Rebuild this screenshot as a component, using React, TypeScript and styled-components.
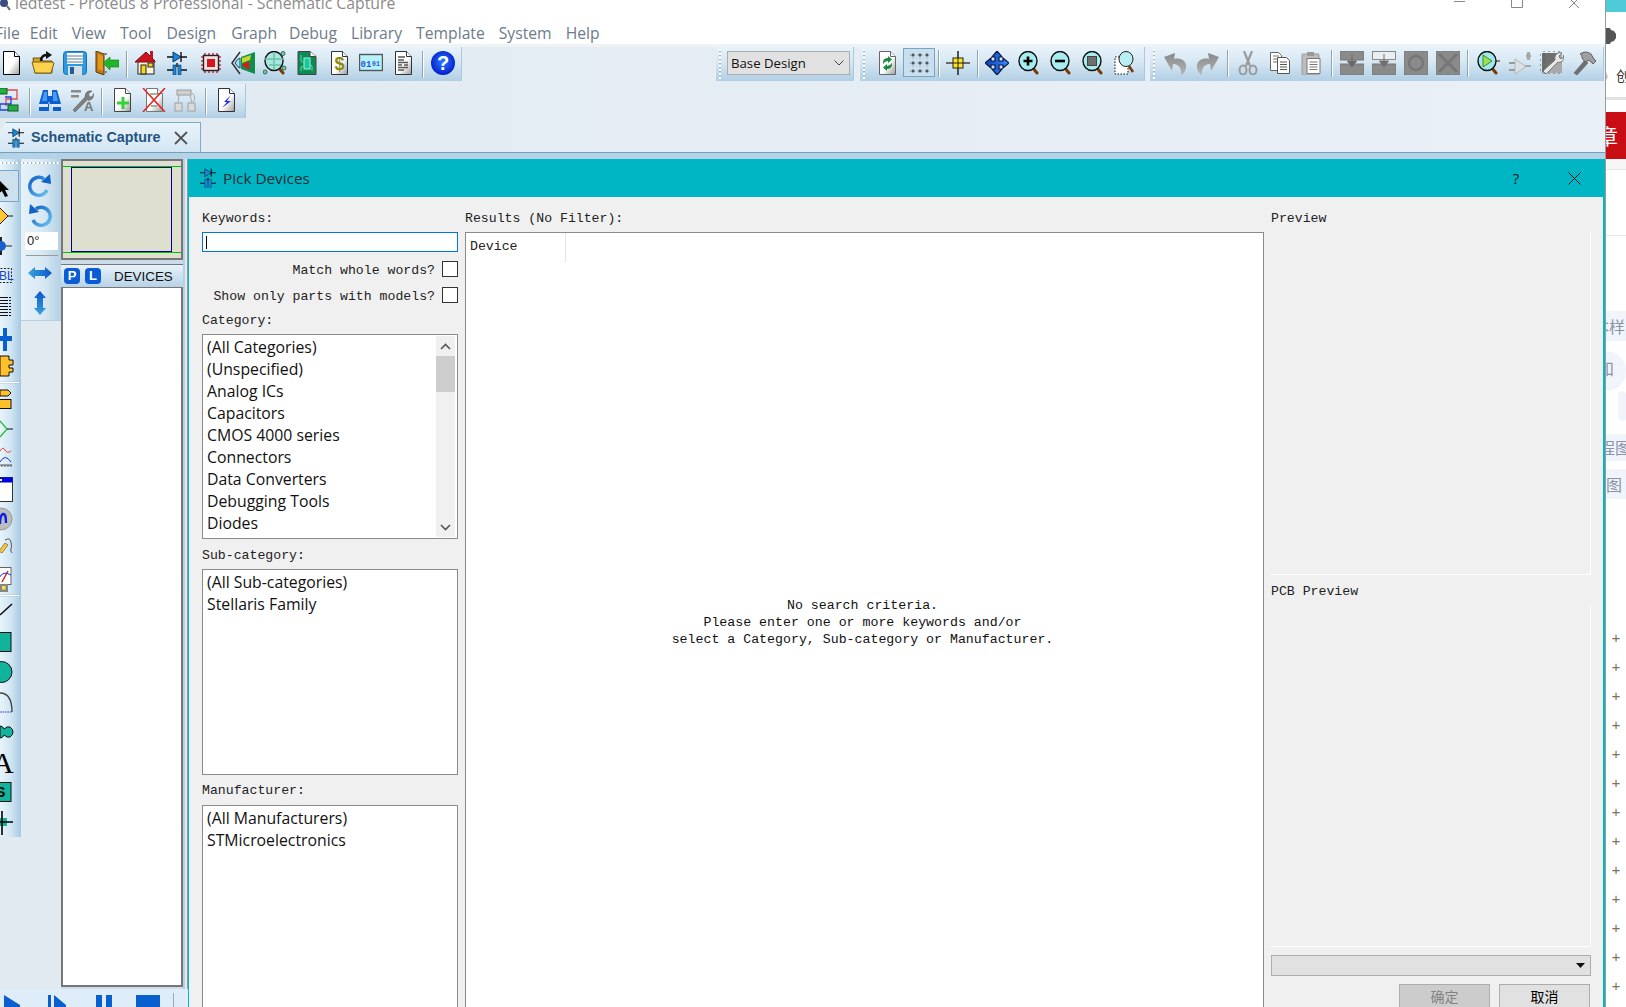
import React from 'react';
import styled, { createGlobalStyle } from 'styled-components';

const Global = createGlobalStyle`
  html, body { margin: 0; padding: 0; background: #fff; overflow: hidden; }
  * { box-sizing: border-box; }
`;

const UI = `"Open Sans", "Noto Sans", "Noto Sans CJK SC", sans-serif`;
const MONO = `"Liberation Mono", "Noto Sans CJK SC", monospace`;

const Page = styled.div`
  width: 1626px; height: 1007px; overflow: hidden; display: grid; grid-template-columns: 1605px 21px;
  font-family: ${UI}; background: #fff;
`;
const Win = styled.div`display: flex; flex-direction: column; height: 1007px; overflow: hidden; min-width: 0;`;
const TitleBar = styled.div`height: 18px; display: flex; overflow: hidden; background: #fff; flex: none;`;
const TitleText = styled.div`
  margin: -8px 0 0 4px; height: 22px; line-height: 22px; font-size: 15.8px; color: #8b8b8b; white-space: nowrap;
`;
const WinControls = styled.div`margin-left: auto; display: flex; color: #777; padding-right: 23px; gap: 44px;`;
const MenuBar = styled.div`height: 26px; flex: none; display: flex; align-items: center; background: #fff; margin-left: -5px; padding-top: 4px;`;
const MenuItem = styled.span<{ $mr: number }>`
  font-size: 15.7px; color: #6d7b8a; margin-right: ${p => p.$mr}px; white-space: nowrap;
`;
const ToolZone = styled.div`
  flex: none; height: 78px; padding-top: 3px; display: flex; flex-direction: column;
  background: linear-gradient(90deg, #e2eaf1 0%, #e9f0f7 100%);
  box-shadow: inset 0 3px 0 #f0f3f6;
`;
const ToolRow = styled.div<{ $mt?: number }>`display: flex; height: 34px; flex: none; margin-top: ${p => p.$mt || 0}px;`;
const RightBars = styled.div`margin-left: auto; padding-right: 1px; display: flex;`;
const Bar = styled.div<{ $ml?: number; $pl?: number; $pr?: number }>`
  display: flex; align-items: center; height: 34px; padding: 0 ${p => p.$pr || 0}px 3px ${p => p.$pl || 0}px;
  margin-left: ${p => p.$ml || 0}px; position: relative;
  background: linear-gradient(180deg, #e8f3fb 0%, #d6e7f3 45%, #b1cfe5 100%);
  border-right: 1px solid #a9c9df;
`;
const Grip = styled.div`
  position: absolute; left: 3px; top: 2px; bottom: 2px; width: 2px;
  background: repeating-linear-gradient(180deg, #fff 0 2px, #9fb4c4 2px 3px, transparent 3px 4px);
`;
const Slot = styled.div<{ $w?: number; $on?: boolean }>`
  width: ${p => p.$w || 32}px; height: 29px; display: flex; align-items: center; justify-content: center; flex: none;
  ${p => p.$on ? 'background: #c9dfee; border: 1px solid #76a5c5;' : ''}
`;
const Gap = styled.div<{ $w: number }>`width: ${p => p.$w}px; flex: none; display: flex; justify-content: center; align-self: stretch; padding: 3px 0 0;`;
const VLine = styled.div`width: 2px; height: 27px; background: linear-gradient(90deg, #8fa4b3 0 1px, #fff 1px 2px);`;
const BarShift = styled.div<{ $ml: number }>`display: flex; align-items: center; margin-left: ${p => p.$ml}px;`;
const SelectBox = styled.div`
  margin-left: 11px; width: 123px; height: 24px; background: #e1e1e1; border: 1px solid #adadad; display: flex; align-items: center;
  padding: 0 5px 0 3px; font-size: 13.2px; color: #111; justify-content: space-between;
`;

const TabRow = styled.div`flex: none; height: 31px; margin-top: 0; display: flex; background: linear-gradient(90deg, #e2eaf1, #e9f0f7); border-bottom: 1px solid #6fa3c0;`;
const Tab = styled.div`
  width: 201px; height: 30px; display: flex; align-items: center; padding-left: 8px;
  background: linear-gradient(180deg, #e8f3fb, #d4e6f3);
  border: 1px solid #7eabc6; border-bottom: none; border-left: none;
  clip-path: polygon(6px 0, 100% 0, 100% 100%, 0 100%, 0 10px);
`;
const TabText = styled.span`
  margin-left: 7px; padding-bottom: 2px; font-family: "Liberation Sans", sans-serif; font-weight: 700; font-size: 14.3px; color: #23547f; white-space: nowrap;
`;
const TabClose = styled.span`margin-left: 13px; display: flex;`;
const Strip = styled.div`flex: none; height: 6px; background: #b5d2e6;`;

const Work = styled.div`flex: 1; min-height: 0; display: flex;`;
const Rail = styled.div`width: 188px; flex: none; display: flex; flex-direction: column; background: #e2eaf1;`;
const RailBody = styled.div`flex: 1; min-height: 0; display: flex;`;
const ToolCol = styled.div`
  width: 21px; flex: none; height: 678px; padding-top: 12px; overflow: hidden; position: relative;
  background: linear-gradient(90deg, #e8f4fb 0%, #cfe4f2 55%, #a6c9e0 100%);
`;
const HGrip = styled.div`
  position: absolute; left: 0; right: 1px; top: 3px; height: 2px;
  background: repeating-linear-gradient(90deg, #fff 0 2px, #a3b7c6 2px 3px, transparent 3px 4px);
`;
const ColSlot = styled.div<{ $on?: boolean }>`
  height: 30px; width: 21px; position: relative;
  ${p => p.$on ? `&::before { content: ''; position: absolute; left: -2px; top: -1px; width: 19px; height: 30px; background: #cde0ee; border: 1px solid #79a6c5; }` : ''}
  svg { display: block; position: relative; overflow: hidden; }
`;
const ColSep = styled.div`height: 1px; margin: 1px 0; width: 19px; background: #fff; box-shadow: 0 0 0 .3px #9db4c4;`;
const Col2 = styled.div`
  width: 40px; flex: none; height: 162px; position: relative; padding: 13px 2px 0 0; display: flex; flex-direction: column; align-items: center;
  background: linear-gradient(90deg, #e6f2fa 0%, #d8e8f3 55%, #b4d1e5 100%);
  border-bottom: 1px solid #b7cfe0;
`;
const Col2Icon = styled.div`height: 30px; display: flex; align-items: center; justify-content: center; flex: none;`;
const Angle = styled.div`
  width: 33px; height: 18px; margin: 0 0 0 3px; background: #fff; font: 13px "Liberation Sans", sans-serif; color: #222; padding: 0 0 0 2px; line-height: 18px;
  flex: none;
`;
const Col2Sep = styled.div`width: 32px; height: 1px; margin: 5px 0 2px 3px; background: #9a9a9a; flex: none;`;
const Panels = styled.div`width: 122px; flex: none; display: flex; flex-direction: column; padding-bottom: 2px; background: #cadcea;`;
const Overview = styled.div`
  height: 101px; flex: none; border: 2px solid #777; background: #dedfcf; padding: 6px 9px 0 8px; position: relative;
`;
const OverviewPage = styled.div`height: 85px; border: 1px solid #00008c;`;
const GreenLine = styled.div<{ $top: number }>`position: absolute; left: 0; right: 0; top: ${p => p.$top}px; height: 1px; background: #00c000;`;
const Devices = styled.div`margin-top: 4px; flex: 1; min-height: 0; display: flex; flex-direction: column; border: 2px solid #777; border-top: 1px solid #777; background: #fff;`;
const DevHead = styled.div`
  height: 23px; flex: none; display: flex; align-items: center; gap: 5px;
  background: linear-gradient(180deg, #e8f2fa, #b6d3e7); border-bottom: 1px solid #777; margin: 0 -2px 0; padding-left: 3px;
`;
const Badge = styled.span`
  width: 16px; height: 16px; border-radius: 4px; background: #0a5cd6; color: #fff; font: 700 13px/16px "Liberation Sans", sans-serif; text-align: center; flex: none;
`;
const DevTitle = styled.span`margin-left: 8px; font: 13.4px "Liberation Sans", sans-serif; color: #111;`;
const RailEdge = styled.div`
  width: 5px; flex: none; background: linear-gradient(90deg, #b5cfe3 0 2px, #e3ebf0 2px 4px, #8899aa 4px 5px);
`;
const BottomBar = styled.div`height: 18px; flex: none; background: #deedf7; position: relative; display: flex; align-items: flex-start; padding-top: 6px; overflow: hidden;`;
const BottomIcon = styled.div<{ $ml: number }>`margin-left: ${p => p.$ml}px; display: flex;`;
const BottomSep = styled.div`margin-left: 13px; margin-top: -2px; width: 1px; height: 14px; background: #9ab; `;

const Dialog = styled.div`
  flex: 1; min-width: 0; display: flex; flex-direction: column; border-left: 1px solid #00b7c3; border-right: 2px solid #00b7c3; background: #f0f0f0;
`;
const DialogHead = styled.div`
  height: 38px; flex: none; background: #00b6c4; display: flex; align-items: center; padding-left: 11px; color: #1f2d33;
`;
const DialogTitle = styled.span`margin-left: 7px; font-size: 15.3px;`;
const HeadBtn = styled.span<{ $ml?: number }>`margin-left: ${p => p.$ml || 0}px; display: flex; font-size: 15px; color: #111;`;
const DialogBody = styled.div`flex: 1; min-height: 0; display: flex; overflow: hidden; padding-left: 13px;`;
const LeftCol = styled.div`width: 256px; flex: none; display: flex; flex-direction: column;`;
const Label = styled.div<{ $mt: number }>`
  font: 13.2px/18px ${MONO}; color: #222; height: 16px; margin-top: ${p => p.$mt}px; white-space: pre; flex: none;
`;
const KeyInput = styled.div`
  margin-top: 6px; height: 20px; flex: none; background: #fff; border: 1px solid #0078d7; padding: 3px 0 0 3px;
`;
const Caret = styled.div`width: 1px; height: 13px; background: #000;`;
const CheckRow = styled.div<{ $mt: number }>`
  margin-top: ${p => p.$mt}px; height: 16px; flex: none; display: flex; justify-content: flex-end; align-items: center; gap: 6px;
  font: 13.2px/16px ${MONO}; color: #222; white-space: pre;
`;
const CheckText = styled.span`margin-top: 4px; margin-right: 1px;`;
const Check = styled.div`width: 16px; height: 16px; background: #fff; border: 1px solid #333; flex: none;`;
const ListBox = styled.div<{ $mt: number; $h: number }>`
  margin-top: ${p => p.$mt}px; height: ${p => p.$h}px; flex: none; background: #fff; border: 1px solid #8a8a8a; padding: 2px 0 0 4px; position: relative;
  display: flex; flex-direction: column;
`;
const ListItem = styled.div`height: 22px; line-height: 21px; font-size: 15.8px; color: #111; white-space: nowrap; flex: none;`;
const ScrollBar = styled.div`
  position: absolute; right: 2px; top: 1px; bottom: 1px; width: 19px; background: #f0f0f0; display: flex; flex-direction: column; align-items: center;
`;
const ScrollBtn = styled.div`height: 20px; flex: none; display: flex; align-items: center; justify-content: center;`;
const Thumb = styled.div`width: 100%; height: 36px; background: #cdcdcd; flex: none;`;
const ScrollFill = styled.div`flex: 1;`;
const MidCol = styled.div`width: 799px; margin-left: 7px; flex: none; display: flex; flex-direction: column;`;
const Results = styled.div`
  margin-top: 6px; height: 780px; flex: none; background: #fff; border: 1px solid #8a8a8a; position: relative; display: flex; align-items: center; justify-content: center; padding-right: 4px;
`;
const ResHead = styled.div`
  position: absolute; left: 0; top: 0; width: 100px; height: 29px; padding: 6px 0 0 4px; border-right: 1px solid #e5e5e5;
  font: 13.2px/16px ${MONO}; color: #222;
`;
const Message = styled.div`font: 13.25px/17px ${MONO}; color: #111; text-align: center; white-space: pre;`;
const RightCol = styled.div`width: 320px; margin-left: 7px; flex: none; display: flex; flex-direction: column;`;
const PreviewArea = styled.div<{ $h: number }>`
  margin-top: 6px; height: ${p => p.$h}px; flex: none; border-right: 1px solid #fff; border-bottom: 1px solid #fff;
`;
const ComboBox = styled.div`
  margin-top: 8px; height: 21px; flex: none; background: #e1e1e1; border: 1px solid #adadad; display: flex; align-items: center; justify-content: flex-end; padding-right: 5px;
`;
const Buttons = styled.div`margin-top: 8px; padding-right: 1px; display: flex; justify-content: flex-end; gap: 9px; flex: none;`;
const DlgButton = styled.div<{ $off?: boolean }>`
  width: 91px; height: 30px; border: 1px solid #adadad; background: ${p => p.$off ? '#cccccc' : '#e1e1e1'}; color: ${p => p.$off ? '#838383' : '#000'};
  font: 14px/22px "Noto Sans CJK SC", sans-serif; text-align: center;
`;

const Side = styled.div`
  height: 1007px; overflow: hidden; border-left: 1px solid #9a9a9a; display: flex; flex-direction: column; background: #fff;
  font-family: "Noto Sans CJK SC", sans-serif;
`;
const SideBlock = styled.div<{ $h: number; $mt?: number; $bg?: string; $line?: boolean }>`
  height: ${p => p.$h}px; margin-top: ${p => p.$mt || 0}px; flex: none; background: ${p => p.$bg || 'transparent'}; overflow: hidden; white-space: nowrap;
  ${p => p.$line ? 'border-bottom: 1px solid #e6e6e6;' : ''}
`;
const SideRow = styled.div`display: flex; align-items: center; font-size: 14px; color: #333; line-height: 15px; height: 15px; overflow: hidden; white-space: nowrap;`;
const Quote = styled.span`color: #c9873a; width: 15px; flex: none; margin-left: -5px;`;
const RedChar = styled.div`color: #fff; font-size: 21px; line-height: 47px; margin-left: -9px;`;
const GreyChar = styled.div<{ $ml: number; $lh: number }>`color: #8a93a8; font-size: 16px; line-height: ${p => p.$lh}px; margin-left: ${p => p.$ml}px;`;
const Blob = styled.div<{ $ml?: number }>`height: 100%; margin-left: ${p => p.$ml || -20}px; border-radius: 20px; background: #f1f4fb; overflow: hidden;`;
const Plus = styled.div`height: 29px; flex: none; text-align: center; font: 15px/29px "Liberation Mono", monospace; color: #7d7260;`;

const Svg: React.FC<{ w: number; h: number; vw?: number; vh?: number; children: React.ReactNode }> = ({ w, h, vw = w, vh = h, children }) => (
  <svg width={w} height={h} viewBox={`0 0 ${vw} ${vh}`}>{children}</svg>
);
const Defs = styled.svg`display: block; width: 0; height: 0; flex: none;`;

const Doc: React.FC<{ children?: React.ReactNode; stroke?: string }> = ({ children, stroke = '#333' }) => (
  <>
    <path d="M4.5 .5h11l5 5v18h-16z" fill="url(#doc)" stroke={stroke} />
    <path d="M15.5 .5v5h5" fill="#fff" stroke={stroke} />
    {children}
  </>
);
const Lens: React.FC<{ fill?: string; children?: React.ReactNode }> = ({ fill = '#a6ecf0', children }) => (
  <>
    <path d="M15 16l5 6" stroke="#7a3a08" strokeWidth="3" strokeLinecap="round" />
    <ellipse cx="11" cy="10" rx="9" ry="9.5" fill={fill} stroke="#111" strokeWidth="1.4" />
    {children}
  </>
);

const icons: Record<string, React.ReactNode> = {
  new: <Doc stroke="#000" />,
  open: <>
    <path d="M2 7h8l2 3h9v12H4z" fill="#d9a520" stroke="#6b5210" />
    <path d="M1 11h20l2 1-3 10H4z" fill="#ffd34d" stroke="#7a5c10" />
    <path d="M10 10c0-5 3-6 6-6" fill="none" stroke="#111" strokeWidth="2.4" />
    <path d="M15 0l6 4-6 4z" fill="#111" />
  </>,
  save: <>
    <rect x=".5" y=".5" width="23" height="23" rx="3" fill="#2e9be0" stroke="#1a6eb0" />
    <rect x="4" y="2" width="16" height="11" fill="#fff" />
    <path d="M4 5h16M4 8h16M4 11h16" stroke="#8fa9bc" strokeWidth="1.4" />
    <rect x="5" y="15" width="14" height="9" fill="#d8dde2" />
    <rect x="7" y="16" width="4" height="7" fill="#1a5d99" />
  </>,
  exit: <>
    <path d="M1 0l8 3v21l-8-3z" fill="#c07a10" stroke="#5a3a08" />
    <path d="M9 2h3v2H9zM9 20h3v2H9z" fill="#888" />
    <path d="M3 3l5 2v15l-5-2z" fill="#e09a20" />
    <path d="M8 12l7-6v3h9v7h-9v3z" fill="#21b52a" stroke="#0d7a16" strokeWidth=".6" />
  </>,
  home: <>
    <rect x="3" y="10" width="16" height="13" fill="#fbf6da" stroke="#222" />
    <rect x="6" y="14" width="5" height="9" fill="#f6d618" stroke="#222" />
    <rect x="13" y="12" width="5" height="4" fill="#f6d618" stroke="#222" />
    <path d="M0 11L11 1l9 9v1H0z" fill="#c8141e" stroke="#7a0c12" />
    <rect x="15" y="0" width="3" height="7" fill="#c8141e" />
  </>,
  schem: <>
    <path d="M0 6h6M14 6h6" stroke="#111" strokeWidth="1.4" />
    <path d="M6 1l8 5-8 5z" fill="#1a86d8" stroke="#0c3a66" />
    <path d="M14 1v10M10 12v4" stroke="#111" strokeWidth="1.4" />
    <path d="M0 19h6M14 19h6" stroke="#111" strokeWidth="1.4" />
    <rect x="6" y="14" width="3" height="10" fill="#1a86d8" stroke="#0c3a66" strokeWidth=".6" />
    <rect x="11" y="14" width="3" height="10" fill="#1a86d8" stroke="#0c3a66" strokeWidth=".6" />
  </>,
  chip: <>
    <path d="M6 2v20M10 2v20M14 2v20M18 2v20M2 6h20M2 10h20M2 14h20M2 18h20" stroke="#d8303a" strokeWidth="1.6" />
    <rect x="4.5" y="4.5" width="15" height="15" fill="#f3e4e4" stroke="#222" strokeWidth="1.4" />
    <rect x="8" y="8" width="8" height="8" fill="#d8141e" />
  </>,
  view3d: <>
    <path d="M9 1L1 12l8 11" fill="none" stroke="#333" strokeWidth="1.5" />
    <path d="M4 12q3-5 5-5v10q-2 0-5-5z" fill="#9fdff0" stroke="#0c4a66" />
    <path d="M10 6l14-5v22l-14-5z" fill="#0f8d4a" />
    <path d="M11 7l9-3-1 5-8 3z" fill="#c9d820" />
    <path d="M11 14l7-4v9z" fill="#e01515" />
  </>,
  pcbzoom: <>
    <Lens fill="#a9e8de"><path d="M11 1v18M2 8h18M6 14h12" stroke="#6fbfaa" strokeWidth="1.5" /></Lens>
    <circle cx="20" cy="2.5" r="2" fill="#7fc8b0" stroke="#2a6a55" />
    <circle cx="2" cy="21" r="2" fill="#7fc8b0" stroke="#2a6a55" />
    <circle cx="21" cy="17" r="2" fill="#7fc8b0" stroke="#2a6a55" />
  </>,
  pcb: <>
    <path d="M3 .5h12l6 5v18H3z" fill="#0e8b55" stroke="#444" />
    <path d="M15 .5v5h6" fill="#fff" stroke="#444" />
    <rect x="9" y="7" width="6" height="11" fill="#19c6a0" stroke="#9df5d8" />
    <path d="M6 4v6l3 2M17 20v-5l-2-2M6 20v-4l3-1" fill="none" stroke="#46e0b0" />
  </>,
  bom: <Doc><text x="12.5" y="19" textAnchor="middle" fontFamily="Liberation Sans" fontWeight="700" fontSize="18" fill="#8a8a10">$</text></Doc>,
  bin: <>
    <rect x=".5" y="3.5" width="23" height="16" fill="#b6f2fb" stroke="#555" strokeWidth="1.4" />
    <text x="1.5" y="15.5" fontFamily="Liberation Mono" fontWeight="700" fontSize="9" fill="#2b55e0">01</text>
    <text x="13" y="14.5" fontFamily="Liberation Mono" fontWeight="700" fontSize="6.5" fill="#2b55e0">01</text>
  </>,
  text: <Doc>
    <path d="M7 6h7M7 9h6M7 11.5h10M7 14h4M13 14h4M7 16.5h10M7 19h6" stroke="#555" strokeWidth="1.3" />
  </Doc>,
  help: <>
    <circle cx="12" cy="12" r="12" fill="url(#help)" />
    <text x="12" y="19" textAnchor="middle" fontFamily="Liberation Sans" fontWeight="700" fontSize="20" fill="#fff">?</text>
  </>,
  flow: <>
    <path d="M9 2h10v9H8v7" fill="none" stroke="#e04a4a" strokeWidth="1.3" />
    <path d="M7 9h6v7H2v6h10" fill="none" stroke="#2040e0" strokeWidth="1.3" />
    <rect x="-2" y="0" width="11" height="6" fill="#22b040" stroke="#125a20" />
    <rect x="10" y="17" width="10" height="6" fill="#22b040" stroke="#125a20" />
  </>,
  binoc: <>
    <path d="M5 2h5v6h4V2h5l4 14v7h-8v-7h-3.5v-2h-1V16H11v7H1v-7z" fill="#0b5fd0" />
    <path d="M1 16h9v3H1zM14 16h9v3h-9z" fill="#fff" opacity=".85" />
    <path d="M6 4h3v9H4z" fill="#4a9bf0" />
    <path d="M15 4h3l2 9h-5z" fill="#4a9bf0" />
  </>,
  wrenchA: <>
    <path d="M1 2h10v2.5H1zM1 7h8v2.5H1z" fill="#8a8a8a" />
    <path d="M3 22L15 9q0-4 2.5-5.5 2-1 4.5-.5l-3.5 3 1 3 3-.5 1-3q.5 5-3 6.5-2 1-3-.2L5 24z" fill="#7f7f7f" stroke="#555" strokeWidth=".5" />
    <text x="14" y="23" fontFamily="Liberation Sans" fontWeight="700" fontSize="13" fill="#777">A</text>
  </>,
  addDoc: <Doc stroke="#444"><path d="M13 9v12M7 15h12" stroke="#35d03a" strokeWidth="3" /></Doc>,
  delDoc: <Doc stroke="#777">
    <path d="M8 6h8M9 18h6" stroke="#79a779" strokeWidth="1.4" />
    <path d="M1 0l22 24M23 0L1 24" stroke="#e52525" strokeWidth="1.6" />
  </Doc>,
  tree: <>
    <rect x="3" y="2" width="14" height="5" fill="#cfcfcf" stroke="#9a9a9a" />
    <rect x="1" y="15" width="7" height="8" fill="#dadada" stroke="#a0a0a0" />
    <rect x="14" y="15" width="7" height="8" fill="#dadada" stroke="#a0a0a0" />
    <path d="M5 7l-1 8M16 7l2 8M18 5q5 4 1 9" fill="none" stroke="#a6a6a6" />
  </>,
  boltDoc: <Doc>
    <path d="M17 7l-7 7h3l-5 6 9-7h-4z" fill="#1a2ae0" />
  </Doc>,
  refresh: <Doc stroke="#666">
    <path d="M8 12q0-5 5-5V5l4 3.5-4 3.5v-2q-3 0-5 3z" fill="#1c8a3e" />
    <path d="M17 13q0 5-5 5v2l-4-3.5 4-3.5v2q3 0 5-3z" fill="#1c8a3e" />
  </Doc>,
  grid: <>
    <path d="M6 2v20M13 2v20M20 2v20M2 4h20M2 12h20M2 20h20" stroke="#9aa7b0" strokeDasharray="2 2" strokeWidth=".7" />
    {[4, 12, 20].map(y => [6, 13, 20].map(x => <circle key={`${x}-${y}`} cx={x} cy={y} r="1.6" fill="#4a5560" />))}
  </>,
  origin: <>
    <path d="M0 12h24" stroke="#6a6a6a" strokeWidth="2" />
    <path d="M12 0v24" stroke="#222" strokeWidth="1.5" />
    <rect x="7" y="7" width="10" height="10" fill="#ffe61a" stroke="#222" />
    <path d="M12 7v10M7 12h10" stroke="#222" />
  </>,
  move: <path d="M12 0l5 6h-3v4h4V7l6 5-6 5v-3h-4v4h3l-5 6-5-6h3v-4H6v3l-6-5 6-5v3h4V6H7z" fill="url(#move)" stroke="#0a1a44" strokeWidth="1.2" />,
  zin: <Lens><path d="M6.5 10h9M11 5.5v9" stroke="#000" strokeWidth="2.6" /></Lens>,
  zout: <Lens><path d="M6 10h10" stroke="#000" strokeWidth="2.6" /></Lens>,
  zall: <Lens><rect x="6.5" y="5.5" width="9" height="9" fill="#6f6f6f" stroke="#444" /></Lens>,
  zarea: <>
    <rect x="2" y="6" width="13" height="17" fill="#fff" stroke="#111" strokeDasharray="1.5 1.5" />
    <path d="M16 15l4 6" stroke="#7a3a08" strokeWidth="2.5" />
    <ellipse cx="13" cy="8" rx="7" ry="7.5" fill="#b9eef2" stroke="#222" />
  </>,
  undo: <path d="M0 6L11 2l-1 6c8-2 13 3 12 9-1 4-3 6-5 7 1-6-2-11-8-11l-1 7z" fill="url(#gray)" />,
  redo: <path d="M23 6L12 2l1 6C5 6 0 11 1 17c1 4 3 6 5 7-1-6 2-11 8-11l1 7z" fill="url(#gray)" />,
  cut: <>
    <path d="M8 0l6 15M16 0l-6 15" stroke="#9a9a9a" strokeWidth="2.2" />
    <ellipse cx="7" cy="19" rx="3.5" ry="4.5" fill="none" stroke="#9a9a9a" strokeWidth="2" />
    <ellipse cx="17" cy="19" rx="3.5" ry="4.5" fill="none" stroke="#9a9a9a" strokeWidth="2" />
  </>,
  copy: <>
    <path d="M2.5 1.5h8l3 3v15h-11z" fill="#fff" stroke="#666" />
    <path d="M5 5h6M5 8h6M5 11h6" stroke="#777" />
    <path d="M9.5 6.5h9l3 3v13h-12z" fill="#fff" stroke="#555" />
    <path d="M12 11h7M12 13.5h7M12 16h7M12 18.5h7" stroke="#555" />
  </>,
  paste: <>
    <rect x="2" y="3" width="17" height="21" rx="1" fill="#bdbdbd" stroke="#999" />
    <rect x="7" y="1" width="7" height="4" fill="#999" />
    <path d="M7 7.5h13v15H7z" fill="#fff" stroke="#777" />
    <path d="M9.5 11h8M9.5 13.5h8M9.5 16h8M9.5 18.5h8" stroke="#777" />
  </>,
  bcopy: <>
    <rect x="0" y="0" width="24" height="9" fill="#8a8a8a" stroke="#777" />
    <rect x="0" y="13" width="24" height="11" fill="#8a8a8a" stroke="#777" />
    <path d="M12 3v9M7.5 10l4.5 6 4.5-6z" fill="#6a6a6a" stroke="#6a6a6a" />
  </>,
  bmove: <>
    <rect x=".5" y=".5" width="23" height="8" fill="#e9eef2" stroke="#8a8a8a" />
    <rect x="0" y="13" width="24" height="11" fill="#8a8a8a" stroke="#777" />
    <path d="M12 3v9M7.5 10l4.5 6 4.5-6z" fill="#707070" stroke="#707070" />
  </>,
  brot: <>
    <rect x="0" y="0" width="24" height="24" fill="#8a8a8a" stroke="#7a7a7a" />
    <circle cx="12" cy="12" r="7" fill="none" stroke="#767676" strokeWidth="2.5" />
  </>,
  bdel: <>
    <rect x="0" y="0" width="24" height="24" fill="#8a8a8a" stroke="#7a7a7a" />
    <path d="M3 3l18 18M21 3L3 21" stroke="#767676" strokeWidth="3" />
  </>,
  zplay: <Lens fill="#9fe8ee"><path d="M7 4l9 6-9 6z" fill="#9ce05a" stroke="#3f8a2a" /><path d="M20 10h4" stroke="#222" /></Lens>,
  opamp: <>
    <path d="M7 8l11 7.5L7 23z" fill="#dce2e6" stroke="#b2b8bc" />
    <path d="M1 12h6M1 19h6" stroke="#9a9a9a" strokeWidth="2" />
    <path d="M18 5h5M20.5 1v8" stroke="#a8a8a8" strokeWidth="3" />
    <path d="M17 15h6" stroke="#999" strokeWidth="1.5" />
  </>,
  chipw: <>
    <path d="M2 2h20v20H2z" fill="#6f6f6f" />
    <path d="M2 22L22 2v20z" fill="#a9a9a9" />
    <path d="M4 0v24M9 0v2M14 0v2M19 0v2M0 4h2M0 9h2M0 14h2M0 19h2M9 22v2M14 22v2M19 22v2" stroke="#555" strokeDasharray="1 1" />
    <path d="M3 20L15 9q-1-5 3-7 2-1 4 0l-3 3 1 2.5 3-.5 1-3q1 5-3 7-2 1-3 0L6 23z" fill="#e8e8e8" stroke="#777" />
  </>,
  hammer: <>
    <path d="M2 22L13 9l3 3L5 24z" fill="#707070" stroke="#555" strokeWidth=".5" />
    <path d="M8 3q6-4 11 0l3 5 2 2-3 3-2-2q-2-3-4-1l-2 1-3-4q1-3-2-4z" fill="#a0a0a0" stroke="#5f5f5f" />
  </>,
};

const Ico: React.FC<{ n: string }> = ({ n }) => (
  <svg width={24} height={24} viewBox="0 0 24 24">{icons[n]}</svg>
);

type Tool = string | { sep: number } | { on: string };
const Tools: React.FC<{ items: Tool[] }> = ({ items }) => (
  <>
    {items.map((t, i) =>
      typeof t === 'string'
        ? <Slot key={i}><Ico n={t} /></Slot>
        : 'sep' in t
          ? <Gap key={i} $w={t.sep}><VLine /></Gap>
          : <Slot key={i} $on><Ico n={t.on} /></Slot>
    )}
  </>
);

const s8 = { sep: 8 };
const row1: Tool[] = ['new', 'open', 'save', 'exit', s8, 'home', 'schem', 'chip', 'view3d', 'pcbzoom', 'pcb', 'bom', 'bin', 'text', s8, 'help'];
const row2: Tool[] = ['flow', s8, 'binoc', 'wrenchA', s8, 'addDoc', 'delDoc', 'tree', s8, 'boltDoc'];
const barB: Tool[] = ['refresh', { on: 'grid' }, { sep: 7 }, 'origin', { sep: 7 }, 'move', 'zin', 'zout', 'zall', 'zarea'];
const barC: Tool[] = ['undo', 'redo', s8, 'cut', 'copy', 'paste', s8, 'bcopy', 'bmove', 'brot', 'bdel', s8, 'zplay', 'opamp', 'chipw', 'hammer'];

const menus: [string, number][] = [
  ['File', 10], ['Edit', 14], ['View', 14], ['Tool', 15], ['Design', 15], ['Graph', 12], ['Debug', 14], ['Library', 14], ['Template', 14], ['System', 14], ['Help', 0],
];

const teal = '#12b39b';
const col1a: React.ReactNode[] = [
  <path d="M-3 7L9 19H5l3 6-3 1-3-6-4 3z" fill="#000" />,
  <><path d="M-1 6l9 9-9 9z" fill="#ffc832" stroke="#222" /><path d="M8 15h5" stroke="#111" /></>,
  <><path d="M0 15h12" stroke="#666" strokeWidth="1.5" /><path d="M1 6v18" stroke="#222" strokeWidth="2" /><circle cx="1" cy="15" r="5" fill="#1a5fd0" /></>,
  <><rect x="-3" y="7.5" width="14.5" height="14" fill="none" stroke="#222" strokeDasharray="2 1.5" /><text x="-1" y="19" fontFamily="Liberation Sans" fontSize="12" fill="#1a3fc0">BL</text></>,
  <path d="M0 6.5h11M0 9.5h11M0 12.5h11M0 15.5h11M0 18.5h11M0 21.5h11M0 24.5h11" stroke="#111" strokeWidth="1.1" strokeDasharray="8 1" />,
  <><path d="M0 15h12v5H0z" fill="#0a5fd0" /><path d="M3 7h4v23H3z" fill="#0a5fd0" /></>,
  <path d="M0 5h9v4h4v5H9v3h4v4H9v4H0z" fill="#ffc02a" stroke="#111" />,
];
const col1b: React.ReactNode[] = [
  <><path d="M0 6h8l3 3-3 3H0z" fill="#ffc02a" stroke="#111" /><rect x="-2" y="15.5" width="13" height="9" fill="#ffc02a" stroke="#111" /></>,
  <><path d="M0 7l7 8-7 8" fill="none" stroke="#22c030" strokeWidth="1.3" /><path d="M7 15h6" stroke="#111" /></>,
  <><path d="M0 7q3-5 5-1t6 1" fill="none" stroke="#e84040" /><path d="M0 18q5-9 11 0" fill="none" stroke="#2030d0" /><path d="M0 21h12M2 21v2M5 21v2M8 21v2M11 21v2" stroke="#333" strokeWidth=".8" /></>,
  <><rect x="-2" y="3.5" width="14.5" height="24" fill="#fff" stroke="#333" /><rect x="-2" y="3.5" width="14.5" height="5" fill="#0000e0" /><rect x="0" y="5" width="2" height="2" fill="#fff" /></>,
  <><circle cx="1" cy="15" r="11" fill="#bdbdbd" stroke="#999" /><path d="M0 20q0-9 3-10t3 9" fill="none" stroke="#0a20e0" strokeWidth="2.4" /></>,
  <><path d="M-1 17l6-8 3 2-6 8z" fill="#ffc832" stroke="#444" strokeWidth=".6" /><path d="M5 6q5-3 6 2t0 7 1 4" fill="none" stroke="#555" /></>,
  <><rect x="-2" y="3.5" width="13" height="17" fill="#fff" stroke="#666" /><path d="M2 18L8 7" stroke="#e02020" strokeWidth="1.5" /><path d="M-1 14q4-8 12-3" fill="none" stroke="#2030d0" /><rect x="0" y="20" width="8" height="8" fill="#888" /><rect x="2" y="22" width="3.5" height="3.5" fill="#ffe040" /></>,
];
const col1c: React.ReactNode[] = [
  <path d="M0 18L12 7" stroke="#111" strokeWidth="1.6" />,
  <rect x="-2" y="5.5" width="13" height="19" fill={teal} stroke="#111" />,
  <circle cx="1.5" cy="15" r="10.5" fill={teal} stroke="#111" />,
  <><path d="M0 6q12 0 12 19" fill="none" stroke="#444" strokeWidth="1.4" /><path d="M0 25h12" stroke="#2a2ae0" strokeDasharray="1.5 1" /></>,
  <path d="M0 9q3 0 4 3 3-3 6-2 3 2 3 5t-3 5q-3 1-6-2-1 3-4 3z" fill={teal} stroke="#111" />,
  <text x="-8" y="26" fontFamily="Liberation Serif" fontSize="30" fill="#000">A</text>,
  <><rect x="-2" y="5.5" width="13" height="19" fill={teal} stroke="#111" /><text x="-4" y="20" fontFamily="Liberation Sans" fontWeight="700" fontSize="14" fill="#000">S</text></>,
  <><rect x="-2" y="11" width="9" height="8" fill={teal} /><path d="M-2 15h15M2 4v24" stroke="#000" strokeWidth="1.6" /></>,
];

const chunk = (list: React.ReactNode[], from: number) =>
  list.map((n, i) => (
    <ColSlot key={i + from} $on={from === 0 && i === 0}>
      <svg width="21" height="30" viewBox="0 0 21 30">{n}</svg>
    </ColSlot>
  ));

const cats = ['(All Categories)', '(Unspecified)', 'Analog ICs', 'Capacitors', 'CMOS 4000 series', 'Connectors', 'Data Converters', 'Debugging Tools', 'Diodes'];
const pluses = Array.from({ length: 13 }, (_, i) => i);

const App: React.FC = () => (
  <Page>
    <Global />
    <Win>
      <Defs>
        <defs>
          <linearGradient id="doc" x1="0" y1="0" x2="1" y2="1"><stop offset=".55" stopColor="#fff" /><stop offset="1" stopColor="#9a9a9a" /></linearGradient>
          <radialGradient id="help" cx=".5" cy=".45" r=".6"><stop offset="0" stopColor="#2a7cff" /><stop offset="1" stopColor="#0014c8" /></radialGradient>
          <linearGradient id="move" x1="0" y1="0" x2="1" y2="0"><stop offset="0" stopColor="#0a3fc0" /><stop offset="1" stopColor="#3a8cff" /></linearGradient>
          <linearGradient id="gray" x1="0" y1="0" x2="0" y2="1"><stop offset="0" stopColor="#888" /><stop offset="1" stopColor="#b5b5b5" /></linearGradient>
          <linearGradient id="blueA" x1="0" y1="0" x2="1" y2="1"><stop offset="0" stopColor="#0f62c8" /><stop offset="1" stopColor="#6ac0ee" /></linearGradient>
          <linearGradient id="hArrow" x1="0" x2="1" y1="0" y2="0"><stop offset="0" stopColor="#3aa4dc" /><stop offset="1" stopColor="#0a55cc" /></linearGradient>
          <linearGradient id="vArrow" x1="0" x2="0" y1="0" y2="1"><stop offset="0" stopColor="#0a55cc" /><stop offset="1" stopColor="#3aa4dc" /></linearGradient>
        </defs>
      </Defs>
      <TitleBar>
        <svg width="11" height="12" viewBox="0 0 11 12"><circle cx="4" cy="3" r="4" fill="#3b4d80" /><path d="M7 6l3 4" stroke="#666" strokeWidth="2" /></svg>
        <TitleText>ledtest - Proteus 8 Professional - Schematic Capture</TitleText>
        <WinControls>
          <svg width="13" height="8" viewBox="0 0 13 8"><path d="M1 1.5h11" stroke="#888" /></svg>
          <svg width="14" height="8" viewBox="0 0 14 8"><path d="M1.5 0v7.5h11V0" fill="none" stroke="#888" /></svg>
          <svg width="14" height="8" viewBox="0 0 14 8"><path d="M1 -2l10 10M11 -2L1 8" stroke="#888" /></svg>
        </WinControls>
      </TitleBar>
      <MenuBar>
        {menus.map(([m, r]) => <MenuItem key={m} $mr={r}>{m}</MenuItem>)}
      </MenuBar>
      <ToolZone>
        <ToolRow>
          <Bar $pr={2}><BarShift $ml={-5}><Tools items={row1} /></BarShift></Bar>
          <RightBars>
            <Bar $pr={3}><Grip /><SelectBox>Base Design<svg width="10" height="6" viewBox="0 0 10 6"><path d="M.5.5L5 5 9.5.5" fill="none" stroke="#444" /></svg></SelectBox></Bar>
            <Bar $ml={6} $pl={11} $pr={3}><Grip /><Tools items={barB} /></Bar>
            <Bar $ml={5} $pl={10} $pr={3}><Grip /><Tools items={barC} /></Bar>
          </RightBars>
        </ToolRow>
        <ToolRow $mt={3}>
          <Bar $pr={3}><BarShift $ml={-6}><Tools items={row2} /></BarShift></Bar>
        </ToolRow>
      </ToolZone>
      <TabRow>
        <Tab>
          <Svg w={16} h={20} vw={20} vh={25}>{icons.schem}</Svg>
          <TabText>Schematic Capture</TabText>
          <TabClose><svg width="14" height="14" viewBox="0 0 14 14"><path d="M1 1l12 12M13 1L1 13" stroke="#555" strokeWidth="1.8" /></svg></TabClose>
        </Tab>
      </TabRow>
      <Strip />
      <Work>
        <Rail>
          <RailBody>
            <ToolCol>
              <HGrip />
              {chunk(col1a, 0)}
              <ColSep />
              {chunk(col1b, 10)}
              <ColSep />
              {chunk(col1c, 20)}
            </ToolCol>
            <Col2>
              <HGrip />
              <Col2Icon>
                <svg width="24" height="26" viewBox="0 0 24 26"><path d="M19 16a9 9 0 1 1-3-11" fill="none" stroke="url(#blueA)" strokeWidth="3.4" /><path d="M22 0l1 10-10-2z" fill="#0f62c8" /></svg>
              </Col2Icon>
              <Col2Icon>
                <svg width="24" height="26" viewBox="0 0 24 26"><path d="M5 16a9 9 0 1 0 3-11" fill="none" stroke="url(#blueA)" strokeWidth="3.4" /><path d="M2 0L1 10l10-2z" fill="#0f62c8" /></svg>
              </Col2Icon>
              <Angle>0°</Angle>
              <Col2Sep />
              <Col2Icon>
                <svg width="24" height="14" viewBox="0 0 24 14"><path d="M0 7l7-6v3h10V1l7 6-7 6v-3H7v3z" fill="url(#hArrow)" /></svg>
              </Col2Icon>
              <Col2Icon>
                <svg width="14" height="24" viewBox="0 0 14 24"><path d="M7 0l6 7h-3v10h3l-6 7-6-7h3V7H1z" fill="url(#vArrow)" /></svg>
              </Col2Icon>
            </Col2>
            <Panels>
              <Overview>
                <GreenLine $top={5} />
                <GreenLine $top={91} />
                <OverviewPage />
              </Overview>
              <Devices>
                <DevHead>
                  <Badge>P</Badge>
                  <Badge>L</Badge>
                  <DevTitle>DEVICES</DevTitle>
                </DevHead>
              </Devices>
            </Panels>
            <RailEdge />
          </RailBody>
          <BottomBar>
            <BottomIcon $ml={4}><svg width="16" height="14" viewBox="0 0 16 14"><path d="M0 0l16 10v4H0z" fill="#0a5fd0" /></svg></BottomIcon>
            <BottomIcon $ml={28}><svg width="18" height="14" viewBox="0 0 18 14"><path d="M0 0h3v14H0zM6 0l12 10v4H6z" fill="#0a5fd0" /></svg></BottomIcon>
            <BottomIcon $ml={30}><svg width="16" height="14" viewBox="0 0 16 14"><path d="M0 0h6v14H0zM10 0h6v14h-6z" fill="#0a5fd0" /></svg></BottomIcon>
            <BottomIcon $ml={24}><svg width="24" height="14" viewBox="0 0 24 14"><path d="M0 0h24v14H0z" fill="#0a5fd0" /></svg></BottomIcon>
            <BottomSep />
          </BottomBar>
        </Rail>
        <Dialog>
          <DialogHead>
            <Svg w={16} h={20} vw={20} vh={25}>{icons.schem}</Svg>
            <DialogTitle>Pick Devices</DialogTitle>
            <HeadBtn $ml={1203}>?</HeadBtn>
            <HeadBtn $ml={49}><svg width="13" height="13" viewBox="0 0 13 13"><path d="M.5.5l12 12M12.5.5l-12 12" stroke="#111" /></svg></HeadBtn>
          </DialogHead>
          <DialogBody>
            <LeftCol>
              <Label $mt={13}>Keywords:</Label>
              <KeyInput><Caret /></KeyInput>
              <CheckRow $mt={9}><CheckText>Match whole words?</CheckText><Check /></CheckRow>
              <CheckRow $mt={10}><CheckText>Show only parts with models?</CheckText><Check /></CheckRow>
              <Label $mt={9}>Category:</Label>
              <ListBox $mt={6} $h={205}>
                {cats.map(c => <ListItem key={c}>{c}</ListItem>)}
                <ScrollBar>
                  <ScrollBtn><svg width="11" height="7" viewBox="0 0 11 7"><path d="M1 6l4.5-4.5L10 6" fill="none" stroke="#555" strokeWidth="1.6" /></svg></ScrollBtn>
                  <Thumb />
                  <ScrollFill />
                  <ScrollBtn><svg width="11" height="7" viewBox="0 0 11 7"><path d="M1 1l4.5 4.5L10 1" fill="none" stroke="#555" strokeWidth="1.6" /></svg></ScrollBtn>
                </ScrollBar>
              </ListBox>
              <Label $mt={8}>Sub-category:</Label>
              <ListBox $mt={6} $h={206}>
                <ListItem>(All Sub-categories)</ListItem>
                <ListItem>Stellaris Family</ListItem>
              </ListBox>
              <Label $mt={7}>Manufacturer:</Label>
              <ListBox $mt={7} $h={220}>
                <ListItem>(All Manufacturers)</ListItem>
                <ListItem>STMicroelectronics</ListItem>
              </ListBox>
            </LeftCol>
            <MidCol>
              <Label $mt={13}>Results (No Filter):</Label>
              <Results>
                <ResHead>Device</ResHead>
                <Message>{'No search criteria.\nPlease enter one or more keywords and/or\nselect a Category, Sub-category or Manufacturer.'}</Message>
              </Results>
            </MidCol>
            <RightCol>
              <Label $mt={13}>Preview</Label>
              <PreviewArea $h={343} />
              <Label $mt={8}>PCB Preview</Label>
              <PreviewArea $h={342} />
              <ComboBox><svg width="9" height="5" viewBox="0 0 9 5"><path d="M0 0h9L4.5 5z" fill="#111" /></svg></ComboBox>
              <Buttons>
                <DlgButton $off>确定</DlgButton>
                <DlgButton>取消</DlgButton>
              </Buttons>
            </RightCol>
          </DialogBody>
        </Dialog>
      </Work>
    </Win>
    <Side>
      <SideBlock $h={12} $bg="#4ecbd6" />
      <SideBlock $h={18} $mt={14}>
        <svg width="11" height="18" viewBox="0 0 11 18"><path d="M0 1h4l1 2 3 1 2 3v4l-2 3-3 1-1 2H0z" fill="#555" /></svg>
      </SideBlock>
      <SideBlock $h={15} $mt={24}><SideRow><Quote>》</Quote>创</SideRow></SideBlock>
      <SideBlock $h={3} $mt={14} $bg="#e2e2e2" />
      <SideBlock $h={12} />
      <SideBlock $h={47} $bg="#c90d15"><RedChar>章</RedChar></SideBlock>
      <SideBlock $h={11} $bg="#f6f6f6" $line />
      <SideBlock $h={66} $line />
      <SideBlock $h={30} $mt={75} $bg="#f1f4fb"><GreyChar $ml={-13} $lh={30}>本样</GreyChar></SideBlock>
      <SideBlock $h={40} $mt={10}><Blob><GreyChar $ml={12} $lh={34}>和</GreyChar></Blob></SideBlock>
      <SideBlock $h={30}><Blob $ml={12} /></SideBlock>
      <SideBlock $h={27} $mt={13} $bg="#f1f4fb"><GreyChar $ml={-7} $lh={27}>程图</GreyChar></SideBlock>
      <SideBlock $h={30} $mt={8} $bg="#f1f4fb"><GreyChar $ml={0} $lh={30}>图</GreyChar></SideBlock>
      <SideBlock $h={126} />
      {pluses.map(i => <Plus key={i}>+</Plus>)}
    </Side>
  </Page>
);

export default App;
